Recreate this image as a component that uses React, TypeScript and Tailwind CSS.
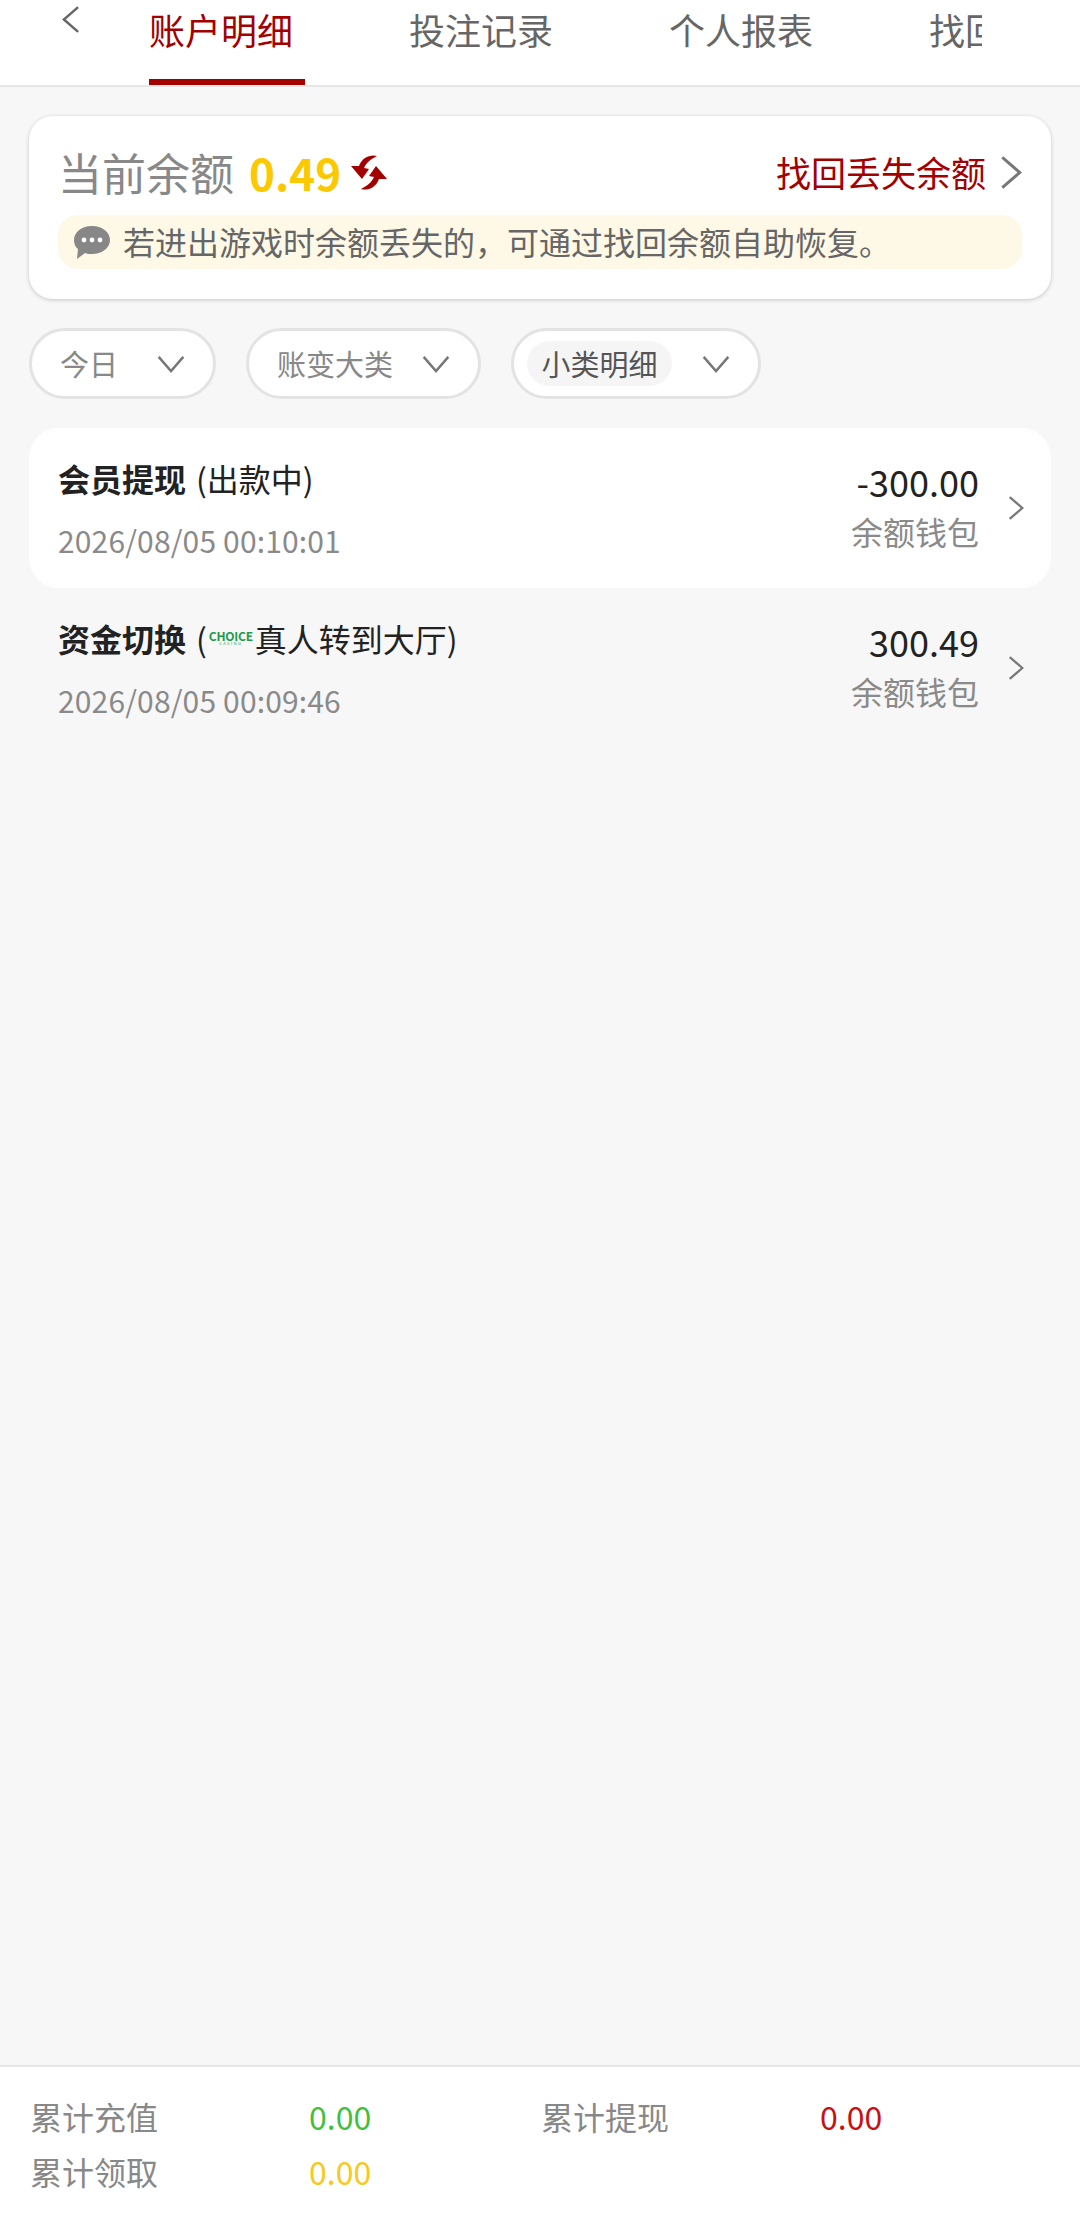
import React from 'react';

const font = { fontFamily: '"Noto Sans CJK SC", "Noto Sans", sans-serif' };

const tabs = ['账户明细', '投注记录', '个人报表', '找回余额'];

function Chevron({ dir, className }: { dir: 'left' | 'right' | 'down'; className: string }) {
  const d = dir === 'left' ? 'M17 1 L2 14 L17 27' : dir === 'right' ? 'M2 1 L17 14 L2 27' : 'M1 2 L14 17 L27 2';
  const box = dir === 'down' ? '0 0 28 19' : '0 0 19 28';
  return (
    <svg viewBox={box} className={className} fill="none" stroke="currentColor" strokeWidth="2.6">
      <path d={d} />
    </svg>
  );
}

function RefreshIcon() {
  const d = 'M26 1 C20 -1 11 2 8 11 L0 11 L11 24 L18 14 L13 13 C15 8 20 4 26 1Z';
  return (
    <svg viewBox="0 0 36 35" className="ml-[10px] h-[35px] w-[36px] text-[#a30000]" fill="currentColor">
      <path d={d} />
      <path d={d} transform="rotate(180 18 17.5)" />
    </svg>
  );
}

function ChatIcon() {
  return (
    <svg viewBox="0 0 36 33" className="ml-[16px] h-[33px] w-[36px] shrink-0">
      <path d="M18 0 C28 0 36 6 36 14 C36 22 28 28 18 28 C15 28 13 28 11 27 L3 33 L4 23 C1 21 0 17 0 14 C0 6 8 0 18 0Z" fill="#878787" />
      <circle cx="10" cy="14" r="2.4" fill="#fff" />
      <circle cx="18" cy="14" r="2.4" fill="#fff" />
      <circle cx="26" cy="14" r="2.4" fill="#fff" />
    </svg>
  );
}

function ChoiceLogo() {
  return (
    <span className="mx-[3px] inline-flex w-[42px] flex-col items-center align-middle leading-none text-[#1f9a4a]">
      <span className="text-[12px] font-bold leading-[11px] tracking-[-0.2px]">CHOICE</span>
      <span className="text-[4px] leading-[5px] tracking-[1.5px]">CASINO</span>
    </span>
  );
}

function Filter({ label, width, active }: { label: string; width: string; active?: boolean }) {
  return (
    <div className={`flex h-[71px] items-center rounded-full border-[3px] border-[#e3e3e3] bg-white ${width}`}>
      {active ? (
        <span className="ml-[13px] flex h-[45px] w-[145px] items-center justify-center rounded-full bg-[#f5f5f5] text-[29px] text-[#555]">{label}</span>
      ) : (
        <span className="ml-[28px] text-[29px] text-[#888]">{label}</span>
      )}
      <Chevron dir="down" className="ml-auto mr-[27px] h-[18px] w-[30px] text-[#777]" />
    </div>
  );
}

function Row({ title, note, date, amount, white }: { title: string; note: React.ReactNode; date: string; amount: string; white?: boolean }) {
  return (
    <div className={`flex h-[160px] items-center rounded-[30px] pl-[29px] pr-[27px] ${white ? 'bg-white' : ''}`}>
      <div className="flex-1">
        <div className="-mt-[4px] flex h-[50px] items-center text-[32px] text-[#222]">
          <span className="font-bold">{title}</span>
          <span className="ml-[10px] flex items-center">{note}</span>
        </div>
        <div className="mt-[17px] text-[30px] leading-[40px] tracking-[0.15px] text-[#8a8a8a]">{date}</div>
      </div>
      <div className="-mt-[4px] text-right">
        <div className="text-[36px] leading-[46px] text-[#222]">{amount}</div>
        <div className="mt-[4px] text-[32px] leading-[46px] text-[#8a8a8a]">余额钱包</div>
      </div>
      <Chevron dir="right" className="ml-[29px] h-[26px] w-[16px] text-[#777]" />
    </div>
  );
}

export default function App() {
  return (
    <div className="flex h-screen flex-col bg-[#f7f7f7]" style={font}>
      {/* Tabs */}
      <div className="flex h-[87px] shrink-0 border-b-2 border-[#e6e6e6] bg-white">
        <div className="ml-[62px] mt-[6px] w-[87px]">
          <Chevron dir="left" className="h-[27px] w-[18px] text-[#666]" />
        </div>
        <div className="flex w-[833px] gap-[104px] overflow-hidden">
          {tabs.map((tab, i) => (
            <div key={tab} className={`h-[85px] w-[156px] shrink-0 border-b-[6px] ${i === 0 ? 'border-[#a30000] text-[#a30000]' : 'border-transparent text-[#666]'}`}>
              <span className="block whitespace-nowrap text-[36px] leading-[58px]">{tab}</span>
            </div>
          ))}
        </div>
      </div>

      {/* Balance card */}
      <div className="mx-[29px] mt-[29px] h-[183px] rounded-[24px] bg-white px-[29px] pt-[27px] shadow-[0_1px_4px_rgba(0,0,0,0.2)]">
        <div className="flex h-[58px] items-center">
          <span className="text-[44px] text-[#888]">当前余额</span>
          <span className="ml-[15px] text-[44px] font-bold text-[#fcc800]">0.49</span>
          <RefreshIcon />
          <span className="ml-auto text-[35px] text-[#a30000]">找回丢失余额</span>
          <Chevron dir="right" className="ml-[14px] h-[33px] w-[22px] text-[#777]" />
        </div>
        <div className="mt-[14px] flex h-[54px] items-center rounded-[20px] bg-[#fef9e6]">
          <ChatIcon />
          <span className="-mt-[2px] ml-[13px] text-[32px] text-[#666]">若进出游戏时余额丢失的，可通过找回余额自助恢复。</span>
        </div>
      </div>

      {/* Filters */}
      <div className="ml-[29px] mt-[29px] flex gap-[30px]">
        <Filter label="今日" width="w-[187px]" />
        <Filter label="账变大类" width="w-[235px]" />
        <Filter label="小类明细" width="w-[250px]" active />
      </div>

      {/* Records */}
      <div className="mx-[29px] mt-[29px]">
        <Row white title="会员提现" note="(出款中)" date="2026/08/05 00:10:01" amount="-300.00" />
        <Row
          title="资金切换"
          note={
            <>
              (<ChoiceLogo />真人转到大厅)
            </>
          }
          date="2026/08/05 00:09:46"
          amount="300.49"
        />
      </div>

      {/* Totals */}
      <div className="mt-auto grid h-[158px] shrink-0 grid-cols-[279px_232px_279px_1fr] content-start gap-y-[13px] border-t-2 border-[#e6e6e6] bg-white pl-[30px] pt-[28px] text-[32px] leading-[42px] text-[#888]">
        <span>累计充值</span>
        <span className="text-[#3fc13f]">0.00</span>
        <span>累计提现</span>
        <span className="text-[#c81010]">0.00</span>
        <span>累计领取</span>
        <span className="text-[#f8c81c]">0.00</span>
      </div>
    </div>
  );
}
